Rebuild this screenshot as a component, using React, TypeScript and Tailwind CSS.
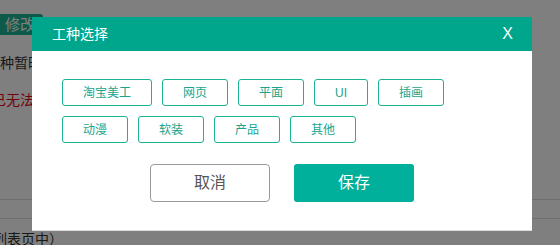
import { useState } from "react";

const TAGS = ["淘宝美工", "网页", "平面", "UI", "插画", "动漫", "软装", "产品", "其他"];

const FONT = { fontFamily: '"Microsoft YaHei", "Liberation Sans", "Noto Sans CJK SC", sans-serif' };

export default function App() {
  const [selected, setSelected] = useState<string[]>([]);

  function toggle(tag: string) {
    setSelected((s) => (s.includes(tag) ? s.filter((t) => t !== tag) : [...s, tag]));
  }

  return (
    <div className="relative w-[560px] h-[245px] overflow-hidden bg-white" style={FONT}>
      {/* 背景のページ */}
      <div className="flex flex-col">
        <div className="mt-[14px] h-[21px] w-[43px] rounded-r-[3px] bg-[#1ab394] text-white text-[15px] leading-[21px] pl-[5px] whitespace-nowrap">
          修改
        </div>
        <p className="mt-[18px] text-[14px] leading-[20px] text-[#333] whitespace-nowrap">
          种暂时
        </p>
        <p className="mt-[17px] ml-[-8px] text-[14px] leading-[20px] text-[#e60012] whitespace-nowrap">
          已无法
        </p>
        <div className="mt-[89px] border-t border-[#ddd]" />
        <div className="mt-[18px] border-t border-[#ddd]" />
        <p className="mt-[10px] ml-[-7px] text-[14px] leading-[20px] text-[#333] whitespace-nowrap">
          列表页中）
        </p>
      </div>

      {/* オーバーレイ */}
      <div className="absolute inset-0 bg-black/50" />

      {/* ダイアログ */}
      <div className="absolute left-[32px] top-[17px] w-[500px] h-[214px] bg-white border-b border-[#ddd] flex flex-col">
        <div className="h-[34px] flex items-center justify-between bg-[#00a68b] pl-[20px] pr-[19px] text-white">
          <span className="text-[14px]">工种选择</span>
          <span className="text-[16px]" style={{ fontFamily: '"Liberation Sans", sans-serif' }}>
            X
          </span>
        </div>

        <div className="flex flex-wrap gap-[10px] w-[400px] mt-[28px] ml-[30px]">
          {TAGS.map((tag) => (
            <button
              key={tag}
              onClick={() => toggle(tag)}
              className={`h-[27px] px-5 rounded-[3px] border text-[12px] leading-none ${
                selected.includes(tag)
                  ? "bg-[#1ab394] border-[#1ab394] text-white"
                  : "bg-white border-[#1ab394] text-[#1aa48b]"
              }`}
            >
              {tag}
            </button>
          ))}
        </div>

        <div className="flex justify-center gap-[24px] mt-[21px]">
          <button className="w-[120px] h-[38px] rounded-[4px] border border-[#999] bg-white text-[16px] text-[#555]">
            取消
          </button>
          <button className="w-[120px] h-[38px] rounded-[3px] bg-[#00b09b] text-[16px] text-white">
            保存
          </button>
        </div>
      </div>
    </div>
  );
}
